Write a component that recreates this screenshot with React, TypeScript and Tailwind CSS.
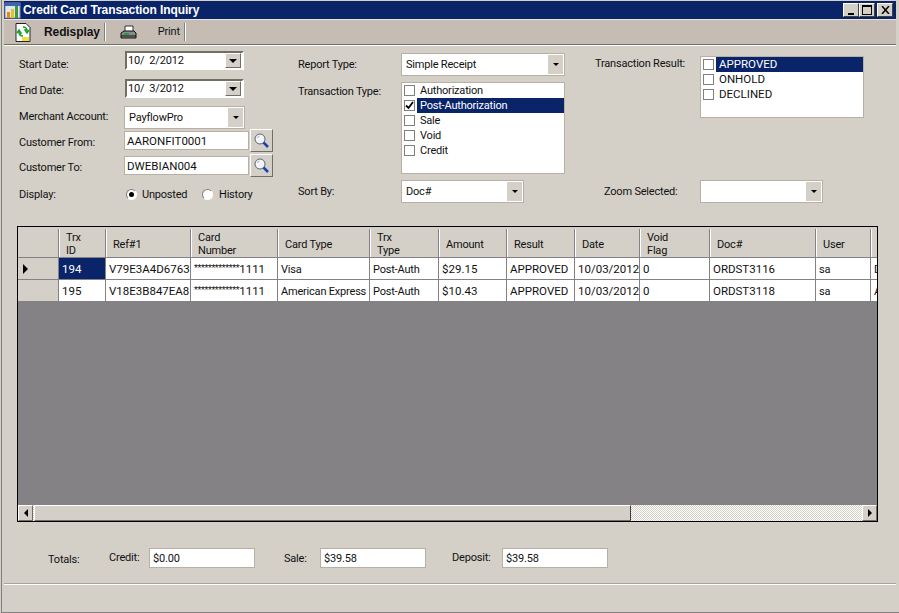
import React from "react";

const gridCols = "grid grid-cols-[41px_47px_85px_87px_92px_69px_68px_68px_65px_70px_106px_55px_40px]";

const headers = [
  ["Trx", "ID"],
  ["Ref#1"],
  ["Card", "Number"],
  ["Card Type"],
  ["Trx", "Type"],
  ["Amount"],
  ["Result"],
  ["Date"],
  ["Void", "Flag"],
  ["Doc#"],
  ["User"],
  [""],
];

const rows = [
  ["194", "V79E3A4D6763", "*************1111", "Visa", "Post-Auth", "$29.15", "APPROVED", "10/03/2012", "0", "ORDST3116", "sa", "D"],
  ["195", "V18E3B847EA8", "*************1111", "American Express", "Post-Auth", "$10.43", "APPROVED", "10/03/2012", "0", "ORDST3118", "sa", "A"],
];

// capitals and digits run wider than lowercase in the old system font
const wide = "text-[11.5px] tracking-normal";
const hasLower = (text: string) => /[a-z]/.test(text);

function Caret() {
  return <span className="block h-0 w-0 border-x-[3px] border-t-[3px] border-x-transparent border-t-black" />;
}

function DateField({ value }: { value: string }) {
  return (
    <div className="ml-px flex h-[19px] w-[119px] items-center justify-between border-2 border-t-[#716f64] border-l-[#716f64] border-r-white border-b-white bg-white pl-[1px] pr-[1px]">
      <span className="whitespace-pre">{value}</span>
      <span className="flex h-[15px] w-[16px] items-center justify-center border border-t-white border-l-white border-r-[#716f64] border-b-[#716f64] bg-[#d4d0c8]">
        <span className="block h-0 w-0 border-x-[4px] border-t-[4px] border-x-transparent border-t-black" />
      </span>
    </div>
  );
}

function Select({ value, width }: { value: string; width: string }) {
  return (
    <div className={`flex items-center justify-between border border-[#b8b0a4] bg-white p-px pl-[4px] ${width}`}>
      <span>{value}</span>
      <span className="flex h-full w-[15px] items-center justify-center bg-[#d4d0c8]">
        <Caret />
      </span>
    </div>
  );
}

function LookupButton() {
  return (
    <button className="ml-px flex h-[23px] w-[23px] items-center justify-center border border-t-white border-l-white border-r-[#716f64] border-b-[#716f64] bg-[#d4d0c8]">
      <svg width="17" height="17" viewBox="0 0 17 17">
        <circle cx="7" cy="7" r="5" fill="#f4f6fb" stroke="#5a6478" strokeWidth="1" />
        <path d="M4.5 6a3 3 0 0 1 2-2" stroke="#9aa8c8" fill="none" />
        <path d="M10.5 10.5l4.5 4.5" stroke="#1f3fb5" strokeWidth="2.5" />
      </svg>
    </button>
  );
}

function CheckItem({ label, selected, checked }: { label: string; selected?: boolean; checked?: boolean }) {
  return (
    <div className="flex h-[15px] items-center pl-[2px]">
      <span className="flex h-[11px] w-[11px] shrink-0 items-center justify-center border border-[#808080] bg-white">
        {checked && (
          <svg width="9" height="9" viewBox="0 0 9 9">
            <path d="M1 4.5l2.5 2.5 4.5-6" fill="none" stroke="#000" strokeWidth="1.8" />
          </svg>
        )}
      </span>
      <span className={`ml-[2px] flex h-[15px] flex-1 items-center pl-[3px] ${hasLower(label) ? "" : `pb-[2px] ${wide}`} ${selected ? "bg-[#0a246a] text-white" : ""}`}>{label}</span>
    </div>
  );
}

function Radio({ on }: { on?: boolean }) {
  return (
    <span className="flex h-[11px] w-[11px] items-center justify-center rounded-full border border-t-[#808080] border-l-[#808080] border-r-white border-b-white bg-white">
      {on && <span className="h-[5px] w-[5px] rounded-full bg-black" />}
    </span>
  );
}

function TotalField({ value }: { value: string }) {
  return <div className="flex h-[20px] w-[106px] items-center border border-[#b8b0a4] bg-white pl-[3px] pt-[2px]">{value}</div>;
}

function WinButton({ children }: { children: React.ReactNode }) {
  return (
    <span className="flex h-[14px] w-[16px] items-center justify-center border border-t-white border-l-white border-r-[#404040] border-b-[#404040] bg-[#d4d0c8]">
      {children}
    </span>
  );
}

// the masked card number has tiny raised asterisks in the original grid
function CardNumber({ value }: { value: string }) {
  const stars = value.replace(/[^*]/g, "");
  return (
    <span>
      <span className="align-[2px] text-[9px] tracking-[-0.4px]">{stars}</span>
      {value.slice(stars.length)}
    </span>
  );
}

export default function App() {
  return (
    <div className="h-[613px] w-[899px] overflow-hidden bg-[#d4d0c8] pl-px font-['Roboto','Liberation_Sans',Arial,sans-serif] text-[11px] leading-[14px] tracking-[-0.2px] text-[#111]">
      <div className="h-full border-b border-l border-[#808080] pl-[2px] pr-[3px] pt-px">
        {/* Title bar */}
        <div className="flex h-[18px] items-center justify-between bg-[#0a246a] pr-[3px]">
          <div className="flex items-center">
            <svg width="18" height="17" viewBox="0 0 18 17" className="mr-px">
              <rect x="1" y="1" width="15" height="15" fill="#dfe6f2" stroke="#7f8fb0" />
              <rect x="1" y="1" width="15" height="3" fill="#3f64b4" />
              <rect x="3" y="10" width="3" height="6" fill="#e08a20" />
              <rect x="7" y="7" width="3" height="9" fill="#e8c020" />
              <rect x="11" y="4" width="3" height="12" fill="#3a9a3a" />
            </svg>
            <span className="font-['Liberation_Sans',Arial,sans-serif] text-[12px] font-bold tracking-[-0.1px] text-white">Credit Card Transaction Inquiry</span>
          </div>
          <div className="flex items-center">
            <WinButton>
              <span className="mt-[7px] block h-[2px] w-[6px] bg-black" />
            </WinButton>
            <WinButton>
              <span className="block h-[10px] w-[10px] border border-t-2 border-black" />
            </WinButton>
            <span className="ml-[2px]">
              <WinButton>
                <svg width="9" height="8" viewBox="0 0 9 8">
                  <path d="M1 0l7 8M8 0l-7 8" stroke="#000" strokeWidth="1.5" />
                </svg>
              </WinButton>
            </span>
          </div>
        </div>

        {/* Toolbar */}
        <div className="flex h-[26px] items-center border-t border-b border-t-[#e8e4dc] border-b-[#716f64] bg-[#c5bdb4] pl-[11px]">
          <svg width="16" height="19" viewBox="0 0 16 19">
            <path d="M1 .5h10l4 4v14H1z" fill="#fff" stroke="#222" />
            <path d="M8 4a4 4 0 0 1 4 3l-2 0 2 3 2-3" fill="none" stroke="#18a028" strokeWidth="1.5" />
            <path d="M8 13a4 4 0 0 1-4-3l2 0-2-3-2 3" fill="none" stroke="#18a028" strokeWidth="1.5" />
            <rect x="7" y="14" width="7" height="4" fill="#f0e040" />
          </svg>
          <span className="ml-[13px] font-['Liberation_Sans',Arial,sans-serif] text-[12px] font-bold tracking-[-0.1px]">Redisplay</span>
          <span className="ml-[4px] h-[18px] w-[2px] border-l border-r border-l-[#808080] border-r-white" />
          <svg width="17" height="15" viewBox="0 0 17 15" className="ml-[14px]">
            <path d="M5 1h8v6H5z" fill="#fff" stroke="#333" />
            <path d="M1 8l3-2h10l2 2v5H1z" fill="#8a8a8a" stroke="#111" />
            <path d="M1 11h15" stroke="#111" />
            <rect x="4" y="8" width="5" height="2" fill="#20a040" />
          </svg>
          <span className="ml-[21px] w-[22px]">Print</span>
          <span className="ml-[4px] h-[18px] w-[2px] border-l border-r border-l-[#808080] border-r-white" />
        </div>
        <div className="h-px bg-white" />

        {/* Filter form */}
        <div className="flex h-[180px] pl-[15px]">
          <div className="flex w-[279px] flex-col pt-[5px]">
            <div className="flex h-[19px] items-center">
              <span className="w-[105px] pt-[9px]">Start Date:</span>
              <DateField value="10/  2/2012" />
            </div>
            <div className="mt-[9px] flex h-[19px] items-center">
              <span className="w-[105px] pt-[4px]">End Date:</span>
              <DateField value="10/  3/2012" />
            </div>
            <div className="mt-[8px] flex h-[23px] items-center">
              <span className="w-[105px] pb-px">Merchant Account:</span>
              <Select value="PayflowPro" width="h-[23px] w-[121px]" />
            </div>
            <div className="flex h-[23px] items-center">
              <span className="w-[105px] pt-[4px]">Customer From:</span>
              <div className={`flex h-[19px] w-[125px] items-center border border-[#b8b0a4] bg-white pl-[2px] ${wide}`}>AARONFIT0001</div>
              <LookupButton />
            </div>
            <div className="mt-[2px] flex h-[23px] items-center">
              <span className="w-[105px] pt-[4px]">Customer To:</span>
              <div className={`flex h-[19px] w-[125px] items-center border border-[#b8b0a4] bg-white pl-[2px] ${wide}`}>DWEBIAN004</div>
              <LookupButton />
            </div>
            <div className="mt-[9px] flex h-[16px] items-center">
              <span className="w-[107px] pt-[2px]">Display:</span>
              <Radio on />
              <span className="ml-[5px] w-[60px] pt-[2px]">Unposted</span>
              <Radio />
              <span className="ml-[6px] pt-[2px]">History</span>
            </div>
          </div>

          <div className="flex w-[297px] flex-col pt-[7px]">
            <div className="flex h-[23px] items-center">
              <span className="w-[103px]">Report Type:</span>
              <Select value="Simple Receipt" width="h-[23px] w-[164px]" />
            </div>
            <div className="mt-[6px] flex items-start">
              <span className="mt-[3px] w-[103px]">Transaction Type:</span>
              <div className="h-[92px] w-[164px] border border-[#b8b0a4] bg-white">
                <CheckItem label="Authorization" />
                <CheckItem label="Post-Authorization" selected checked />
                <CheckItem label="Sale" />
                <CheckItem label="Void" />
                <CheckItem label="Credit" />
              </div>
            </div>
            <div className="mt-[6px] flex h-[23px] items-center">
              <span className="w-[103px]">Sort By:</span>
              <Select value="Doc#" width="h-[23px] w-[123px]" />
            </div>
          </div>

          <div className="flex flex-col pt-[10px]">
            <div className="flex items-start">
              <span className="mt-px w-[105px]">Transaction Result:</span>
              <div className="h-[62px] w-[164px] border border-[#b8b0a4] bg-white">
                <CheckItem label="APPROVED" selected />
                <CheckItem label="ONHOLD" />
                <CheckItem label="DECLINED" />
              </div>
            </div>
            <div className="mt-[62px] flex h-[23px] items-center">
              <span className="w-[105px] pl-[9px]">Zoom Selected:</span>
              <Select value="" width="h-[23px] w-[123px]" />
            </div>
          </div>
        </div>

        {/* Results grid */}
        <div className="ml-[13px] flex h-[296px] w-[861px] flex-col border border-black bg-[#848284]">
          <div className="flex-1 overflow-hidden">
            <div className={`${gridCols} h-[31px] border-b border-[#848284] bg-[#d4d0c8] pt-[2px]`}>
              <div className="border-r border-[#848284]" />
              {headers.map((h, i) => (
                <div key={i} className="flex flex-col justify-center border-l border-r border-l-white border-r-[#848284] pl-[6px] pt-[2px] leading-[13px]">
                  {h.map((line) => (
                    <span key={line}>{line}</span>
                  ))}
                </div>
              ))}
            </div>
            {rows.map((row, r) => (
              <div key={r} className={`${gridCols} h-[22px] border-b border-[#848284] bg-white`}>
                <div className="flex items-center border-r border-[#848284] bg-[#d4d0c8] pl-[5px]">
                  {r === 0 && <span className="block h-0 w-0 border-y-[5px] border-l-[5px] border-y-transparent border-l-black" />}
                </div>
                {row.map((cell, c) => (
                  <div
                    key={c}
                    className={`flex items-center overflow-hidden whitespace-nowrap border-r border-[#848284] pl-[3px] ${hasLower(cell) ? "pt-[2px]" : wide} ${r === 0 && c === 0 ? "bg-[#0a246a] text-white" : ""}`}
                  >
                    {c === 2 ? <CardNumber value={cell} /> : cell}
                  </div>
                ))}
              </div>
            ))}
          </div>
          {/* Horizontal scrollbar */}
          <div className="flex h-[16px] shrink-0 items-stretch bg-[repeating-conic-gradient(#d4d0c8_0%_25%,#ffffff_0%_50%)] bg-[length:2px_2px]">
            <span className="flex w-[15px] items-center justify-center border border-t-white border-l-white border-r-[#716f64] border-b-[#716f64] bg-[#d4d0c8]">
              <span className="block h-0 w-0 border-y-[4px] border-r-[4px] border-y-transparent border-r-black" />
            </span>
            <span className="ml-px w-[597px] border border-t-white border-l-white border-r-[#404040] border-b-[#716f64] bg-[#d4d0c8]" />
            <span className="ml-auto flex w-[15px] items-center justify-center border border-t-white border-l-white border-r-[#716f64] border-b-[#716f64] bg-[#d4d0c8]">
              <span className="block h-0 w-0 border-y-[4px] border-l-[4px] border-y-transparent border-l-black" />
            </span>
          </div>
        </div>

        {/* Totals */}
        <div className="mt-[25px] flex h-[22px] items-center pl-[44px]">
          <span className="w-[61px] pt-[4px]">Totals:</span>
          <span className="w-[40px]">Credit:</span>
          <TotalField value="$0.00" />
          <span className="ml-[29px] w-[36px] pt-[2px]">Sale:</span>
          <TotalField value="$39.58" />
          <span className="ml-[26px] w-[50px]">Deposit:</span>
          <TotalField value="$39.58" />
        </div>
        <div className="mt-[14px] h-[2px] border-t border-b border-t-[#a8a49c] border-b-white" />
      </div>
    </div>
  );
}
